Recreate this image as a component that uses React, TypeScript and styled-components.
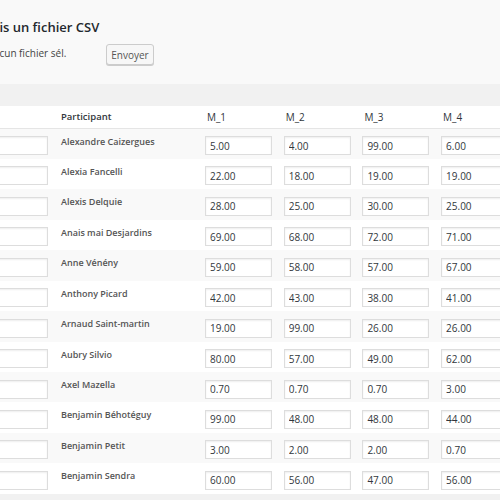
import React from 'react';
import styled, { createGlobalStyle } from 'styled-components';

const Global = createGlobalStyle`
  html, body { margin: 0; padding: 0; background: #f1f1f1; overflow: hidden; }
  body {
    font-family: "Open Sans", "Liberation Sans", sans-serif;
    color: #444;
    width: 500px;
    height: 500px;
  }
  * { box-sizing: border-box; }
`;

const Page = styled.div`
  width: 500px;
  height: 500px;
  overflow: hidden;
  display: flex;
  flex-direction: column;
`;

const Upload = styled.section`
  background: #f9f9f9;
  height: 84px;
  padding-top: 18px;
  flex: none;
`;

const Title = styled.h2`
  margin: 0;
  font-size: 13px;
  font-weight: 600;
  color: #23282d;
  line-height: 18px;
  text-indent: -35px;
  white-space: nowrap;
`;

const FileRow = styled.div`
  display: flex;
  align-items: center;
  margin-top: 8px;
  height: 21px;
`;

const FileName = styled.span`
  width: 106px;
  flex: none;
  font-size: 10px;
  text-indent: -13px;
  white-space: nowrap;
  color: #444;
  margin-top: -4px;
`;

const Button = styled.button`
  height: 21px;
  width: 48px;
  padding: 0;
  font-family: inherit;
  font-size: 10px;
  color: #555;
  background: #f7f7f7;
  border: 1px solid #cccccc;
  border-radius: 3px;
  box-shadow: 0 1px 0 #cccccc;
`;

const Band = styled.div`
  height: 22px;
  background: #f1f1f1;
  flex: none;
`;

const Table = styled.div`
  background: #fff;
  flex: none;
`;

const Row = styled.div<{ $striped?: boolean }>`
  display: grid;
  grid-template-columns: 61px 144px 78.7px 78.7px 78.7px 78.7px;
  height: 30.45px;
  background: ${(p) => (p.$striped ? '#f9f9f9' : '#ffffff')};
`;

const HeadRow = styled.div`
  display: grid;
  grid-template-columns: 61px 144px 78.7px 78.7px 78.7px 78.7px;
  height: 22.5px;
  align-items: center;
  border-bottom: 1px solid #e5e5e5;
  font-size: 10px;
  color: #32373c;
`;

const HeadCell = styled.div<{ $strong?: boolean }>`
  font-weight: ${(p) => (p.$strong ? 600 : 400)};
  font-size: ${(p) => (p.$strong ? 9.5 : 10)}px;
  padding-left: ${(p) => (p.$strong ? 0 : 2)}px;
  white-space: nowrap;
`;

const FirstCell = styled.div`
  display: flex;
  justify-content: flex-end;
  padding: 7.5px 13px 0 0;
`;

const NameCell = styled.div`
  padding-top: 6px;
  font-size: 9px;
  line-height: 14px;
  font-weight: 600;
  color: #555;
  white-space: nowrap;
`;

const ValueCell = styled.div`
  padding-top: 7.5px;
`;

const Field = styled.input<{ $wide?: boolean }>`
  display: block;
  width: ${(p) => (p.$wide ? 80 : 67)}px;
  height: 19px;
  margin: 0;
  padding: 0 4px;
  font-family: inherit;
  font-size: 10px;
  color: #32373c;
  background: #fff;
  border: 1px solid #dddddd;
  border-radius: 0;
  box-shadow: inset 0 1px 2px rgba(0, 0, 0, 0.07);
  outline: none;
`;

const rows: [string, string[]][] = [
  ['Alexandre Caizergues', ['5.00', '4.00', '99.00', '6.00']],
  ['Alexia Fancelli', ['22.00', '18.00', '19.00', '19.00']],
  ['Alexis Delquie', ['28.00', '25.00', '30.00', '25.00']],
  ['Anais mai Desjardins', ['69.00', '68.00', '72.00', '71.00']],
  ['Anne Vénény', ['59.00', '58.00', '57.00', '67.00']],
  ['Anthony Picard', ['42.00', '43.00', '38.00', '41.00']],
  ['Arnaud Saint-martin', ['19.00', '99.00', '26.00', '26.00']],
  ['Aubry Silvio', ['80.00', '57.00', '49.00', '62.00']],
  ['Axel Mazella', ['0.70', '0.70', '0.70', '3.00']],
  ['Benjamin Béhotéguy', ['99.00', '48.00', '48.00', '44.00']],
  ['Benjamin Petit', ['3.00', '2.00', '2.00', '0.70']],
  ['Benjamin Sendra', ['60.00', '56.00', '47.00', '56.00']],
];

export default function App() {
  return (
    <Page>
      <Global />
      <Upload>
        <Title>Choisis un fichier CSV</Title>
        <FileRow>
          <FileName>Aucun fichier sél.</FileName>
          <Button type="button">Envoyer</Button>
        </FileRow>
      </Upload>
      <Band />
      <Table>
        <HeadRow>
          <div />
          <HeadCell $strong>Participant</HeadCell>
          <HeadCell>M_1</HeadCell>
          <HeadCell>M_2</HeadCell>
          <HeadCell>M_3</HeadCell>
          <HeadCell>M_4</HeadCell>
        </HeadRow>
        {rows.map(([name, vals], i) => (
          <Row key={name} $striped={i % 2 === 0}>
            <FirstCell>
              <Field $wide readOnly defaultValue="" />
            </FirstCell>
            <NameCell>{name}</NameCell>
            {vals.map((v, j) => (
              <ValueCell key={j}>
                <Field readOnly defaultValue={v} />
              </ValueCell>
            ))}
          </Row>
        ))}
      </Table>
    </Page>
  );
}
